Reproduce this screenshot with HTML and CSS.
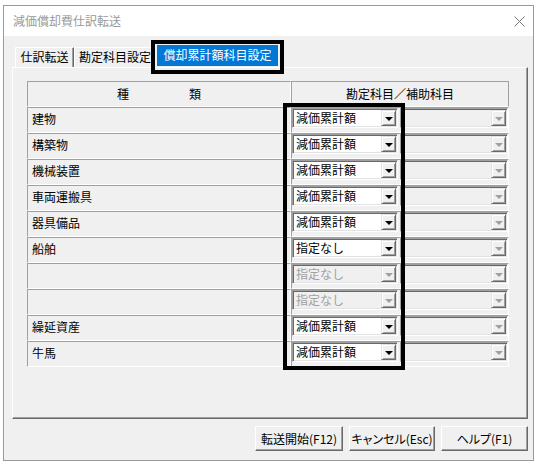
FILE: index.html
```html
<!DOCTYPE html>
<html lang="ja">
<head>
<meta charset="utf-8">
<title>減価償却費仕訳転送</title>
<link rel="stylesheet" href="styles.css">
</head>
<body>
<div class="window">
  <div class="titlebar">
    <span class="title">減価償却費仕訳転送</span>
    <svg class="close" viewBox="0 0 11 11" width="11" height="11"><path d="M0.5 0.5 L10.5 10.5 M10.5 0.5 L0.5 10.5" stroke="#777" stroke-width="1" fill="none"/></svg>
  </div>
  <div class="client">
    <div class="tabs">
      <div class="tab tab-first">仕訳転送</div>
      <div class="tab tab-second">勘定科目設定</div>
      <div class="tab-active">償却累計額科目設定</div>
    </div>
    <div class="panel">
      <div class="grid">
        <div class="hcell">種　　　　　類</div>
        <div class="hcell hcell-last">勘定科目／補助科目</div>

        <div class="label">建物</div>
        <div class="value"><div class="combo"><span class="combo-text">減価累計額</span><span class="combo-btn"><i class="arrow"></i></span></div><div class="combo combo-wide disabled"><span class="combo-text"></span><span class="combo-btn"><i class="arrow"></i></span></div></div>

        <div class="label">構築物</div>
        <div class="value"><div class="combo"><span class="combo-text">減価累計額</span><span class="combo-btn"><i class="arrow"></i></span></div><div class="combo combo-wide disabled"><span class="combo-text"></span><span class="combo-btn"><i class="arrow"></i></span></div></div>

        <div class="label">機械装置</div>
        <div class="value"><div class="combo"><span class="combo-text">減価累計額</span><span class="combo-btn"><i class="arrow"></i></span></div><div class="combo combo-wide disabled"><span class="combo-text"></span><span class="combo-btn"><i class="arrow"></i></span></div></div>

        <div class="label">車両運搬具</div>
        <div class="value"><div class="combo"><span class="combo-text">減価累計額</span><span class="combo-btn"><i class="arrow"></i></span></div><div class="combo combo-wide disabled"><span class="combo-text"></span><span class="combo-btn"><i class="arrow"></i></span></div></div>

        <div class="label">器具備品</div>
        <div class="value"><div class="combo"><span class="combo-text">減価累計額</span><span class="combo-btn"><i class="arrow"></i></span></div><div class="combo combo-wide disabled"><span class="combo-text"></span><span class="combo-btn"><i class="arrow"></i></span></div></div>

        <div class="label">船舶</div>
        <div class="value"><div class="combo"><span class="combo-text">指定なし</span><span class="combo-btn"><i class="arrow"></i></span></div><div class="combo combo-wide disabled"><span class="combo-text"></span><span class="combo-btn"><i class="arrow"></i></span></div></div>

        <div class="label"></div>
        <div class="value"><div class="combo disabled"><span class="combo-text">指定なし</span><span class="combo-btn"><i class="arrow"></i></span></div><div class="combo combo-wide disabled"><span class="combo-text"></span><span class="combo-btn"><i class="arrow"></i></span></div></div>

        <div class="label"></div>
        <div class="value"><div class="combo disabled"><span class="combo-text">指定なし</span><span class="combo-btn"><i class="arrow"></i></span></div><div class="combo combo-wide disabled"><span class="combo-text"></span><span class="combo-btn"><i class="arrow"></i></span></div></div>

        <div class="label">繰延資産</div>
        <div class="value"><div class="combo"><span class="combo-text">減価累計額</span><span class="combo-btn"><i class="arrow"></i></span></div><div class="combo combo-wide disabled"><span class="combo-text"></span><span class="combo-btn"><i class="arrow"></i></span></div></div>

        <div class="label">牛馬</div>
        <div class="value"><div class="combo"><span class="combo-text">減価累計額</span><span class="combo-btn"><i class="arrow"></i></span></div><div class="combo combo-wide disabled"><span class="combo-text"></span><span class="combo-btn"><i class="arrow"></i></span></div></div>

        <div class="highlight"></div>
      </div>
    </div>
    <div class="actions">
      <button class="btn btn-start">転送開始(F12)</button>
      <button class="btn btn-cancel">キャンセル(Esc)</button>
      <button class="btn btn-help">ヘルプ(F1)</button>
    </div>
  </div>
</div>
</body>
</html>
```
FILE: styles.css
```css
* { box-sizing: border-box; }

body {
  margin: 0;
  background: #fff;
  font-family: "Noto Sans CJK JP", "Noto Sans", sans-serif;
  font-size: 12px;
  color: #000;
}

.window {
  margin: 5px 0 0 3px;
  width: 531px;
  height: 456px;
  border: 1px solid #9a9a9a;
  background: #f0f0f0;
  display: flex;
  flex-direction: column;
}

.titlebar {
  flex: none;
  height: 30px;
  background: #fff;
  display: flex;
  align-items: center;
  justify-content: space-between;
  padding: 0 8px 0 9px;
}

.title {
  color: #999;
  line-height: 14px;
}

.close {
  display: block;
}

.client {
  flex: 1;
  padding: 0 5px 0 8px;
}

.tabs {
  height: 31px;
  display: flex;
  align-items: flex-end;
  padding-left: 3px;
}

.tab {
  height: 20px;
  line-height: 18px;
  text-align: center;
  white-space: nowrap;
  border-top: 1px solid #fff;
  border-left: 1px solid #fff;
  border-right: 1px solid #696969;
  box-shadow: inset -1px 0 #a0a0a0;
}

.tab-first { width: 59px; }

.tab-second {
  width: 80px;
  text-align: left;
  padding-left: 4px;
}

.tab-active {
  position: relative;
  z-index: 2;
  width: 121px;
  height: 21px;
  margin: 0 0 1px 3px;
  background: #0078d7;
  color: #fff;
  line-height: 20px;
  text-align: center;
  white-space: nowrap;
}

.tab-active::after {
  content: "";
  position: absolute;
  top: -5px;
  bottom: -8px;
  left: -6px;
  right: -6px;
  border: 4px solid #000;
}

.panel {
  position: relative;
  height: 352px;
  border: 1px solid;
  border-color: #fff #696969 #696969 #fff;
  box-shadow: inset -1px -1px #a0a0a0;
  padding: 13px 0 0 14px;
}

.grid {
  position: relative;
  width: 482px;
  display: grid;
  grid-template-columns: 264px 218px;
  grid-auto-rows: 26px;
}

.hcell,
.label,
.value {
  border-top: 1px solid #a0a0a0;
  border-left: 1px solid #a0a0a0;
  border-bottom: 1px solid #fff;
  border-right: 1px solid #fff;
}

.hcell {
  text-align: center;
  line-height: 23px;
  white-space: pre;
}

.hcell-last {
  border-right-color: #a0a0a0;
}

.label {
  padding-left: 4px;
  line-height: 22px;
}

.value {
  display: flex;
  align-items: flex-start;
  gap: 2px;
}

.combo {
  width: 106px;
  height: 20px;
  border: 1px solid;
  border-color: #a0a0a0 #fff #fff #a0a0a0;
  box-shadow: inset 1px 1px #696969, inset -1px -1px #e3e3e3;
  background: #fff;
  padding: 1px;
  display: flex;
  align-items: center;
}

.combo-wide {
  width: 108px;
}

.combo-text {
  flex: 1;
  padding-left: 2px;
  line-height: 16px;
  white-space: nowrap;
}

.combo-btn {
  flex: none;
  width: 15px;
  height: 16px;
  background: #f0f0f0;
  border: 1px solid;
  border-color: #e3e3e3 #696969 #696969 #e3e3e3;
  box-shadow: inset 1px 1px #fff, inset -1px -1px #a0a0a0;
  display: flex;
  align-items: center;
  justify-content: center;
}

.arrow {
  display: block;
  width: 0;
  height: 0;
  border-left: 4px solid transparent;
  border-right: 4px solid transparent;
  border-top: 4px solid #000;
  margin-top: 1px;
}

.disabled {
  background: #f0f0f0;
  color: #a0a0a0;
}

.disabled .arrow {
  border-top-color: #a0a0a0;
}

.highlight {
  position: absolute;
  left: 256px;
  top: 22px;
  width: 122px;
  height: 267px;
  border: 4px solid #000;
  pointer-events: none;
}

.actions {
  display: flex;
  justify-content: flex-end;
  gap: 6px;
  margin-top: 7px;
}

.btn {
  height: 25px;
  padding: 0;
  font-family: inherit;
  font-size: 12px;
  color: #000;
  background: #f0f0f0;
  border: 1px solid;
  border-color: #fff #696969 #696969 #fff;
  box-shadow: inset -1px -1px #a0a0a0;
  white-space: nowrap;
  font-feature-settings: "palt";
}

.btn-start { width: 88px; }
.btn-cancel { width: 86px; }
.btn-help { width: 87px; }
```
